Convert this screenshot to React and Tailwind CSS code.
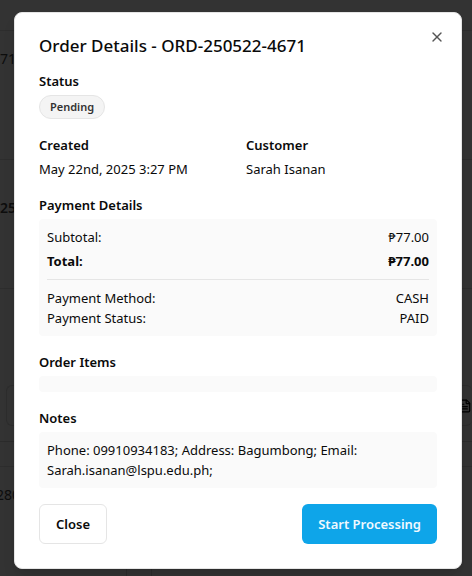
import { X, FileText } from "lucide-react";

function Section({ title, children }) {
  return (
    <section>
      <h3 className="mb-1 font-semibold">{title}</h3>
      {children}
    </section>
  );
}

function Row({ label, value, className = "" }) {
  return (
    <div className={`flex justify-between ${className}`}>
      <dt>{label}</dt>
      <dd>{value}</dd>
    </div>
  );
}

function OrdersPage() {
  return (
    <div aria-hidden="true" className="col-start-1 row-start-1 flex min-h-screen flex-col overflow-hidden bg-[#333333] text-sm text-[#0d0d0d]">
      <div className="h-[30px]" />
      <div className="flex h-[129px] items-start border-t border-[#2d2d2d] pt-[18px]">
        <span className="flex w-4 justify-end">671</span>
      </div>
      <div className="flex h-[129px] items-start border-t border-[#2d2d2d] pt-[38px] font-semibold">
        <span>25</span>
      </div>
      <div className="flex h-[153px] items-end border-t border-[#2d2d2d] pb-[15px] pl-[6px]">
        <div className="flex h-[41px] w-full items-center justify-end rounded-md border border-r-0 border-[#2d2d2d]">
          <FileText className="size-[14px] text-black" strokeWidth={2} />
        </div>
      </div>
      <div className="h-[25px] border-t border-[#2b2b2b]" />
      <div className="flex grow items-start border-t border-[#2d2d2d]">
        <span className="flex w-5 justify-end pt-[18px]">280</span>
        <div className="ml-[106px] w-[26px] self-stretch border-x border-[#2b2b2b]" />
      </div>
    </div>
  );
}

export default function App() {
  return (
    <div className="grid min-h-screen grid-cols-1 font-['Segoe_UI','Noto_Sans','DejaVu_Sans',sans-serif]">
      <OrdersPage />
      <div className="z-10 col-start-1 row-start-1 flex items-start justify-center pt-3 pr-[10px] pb-2 pl-[14px]">
        <div
          role="dialog"
          aria-labelledby="order-title"
          className="relative flex w-full max-w-lg flex-col gap-4 rounded-lg border border-[#e5e5e5] bg-white p-6 text-[13px] leading-5 text-[#0a0a0a] shadow-lg"
        >
          <h2 id="order-title" className="text-[17px] leading-[18px] font-medium">
            Order Details - ORD-250522-4671
          </h2>
          <button type="button" aria-label="Close dialog" className="absolute top-4 right-4 text-[#555555]">
            <X className="size-4" strokeWidth={2} />
          </button>

          <Section title="Status">
            <span className="flex w-fit rounded-full border border-[#e5e5e5] bg-[#f4f4f4] px-[10px] py-[2px] text-[11px] leading-[18px] font-semibold text-[#333333]">
              Pending
            </span>
          </Section>

          <div className="grid grid-cols-2 gap-4">
            <Section title="Created">
              <p>May 22nd, 2025 3:27 PM</p>
            </Section>
            <Section title="Customer">
              <p>Sarah Isanan</p>
            </Section>
          </div>

          <Section title="Payment Details">
            <dl className="rounded bg-[#fafafa] p-2">
              <Row label="Subtotal:" value="₱77.00" />
              <Row label="Total:" value="₱77.00" className="mt-1 mb-2 font-bold" />
              <div className="border-t border-[#e5e5e5] pt-2">
                <Row label="Payment Method:" value="CASH" />
                <Row label="Payment Status:" value="PAID" />
              </div>
            </dl>
          </Section>

          <Section title="Order Items">
            <div className="rounded bg-[#fafafa] p-2" />
          </Section>

          <Section title="Notes">
            <p className="rounded bg-[#fafafa] p-2">
              Phone: 09910934183; Address: Bagumbong; Email: Sarah.isanan@lspu.edu.ph;
            </p>
          </Section>

          <div className="flex justify-between">
            <button type="button" className="h-10 rounded-md border border-[#e5e5e5] bg-white px-4 font-semibold">
              Close
            </button>
            <button type="button" className="h-10 rounded-md bg-[#0ea5e9] px-4 font-semibold text-[#f0f9ff]">
              Start Processing
            </button>
          </div>
        </div>
      </div>
    </div>
  );
}
